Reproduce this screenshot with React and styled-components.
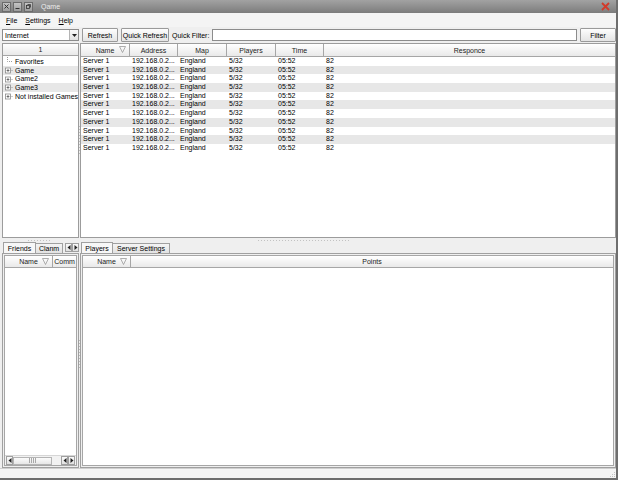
import React from "react"
import styled, { createGlobalStyle } from "styled-components"

const GlobalStyle = createGlobalStyle`
  html, body {
    margin: 0;
    padding: 0;
  }
  body {
    font-family: "Liberation Sans", Arial, sans-serif;
    font-size: 7px;
    color: #000;
    background: #fff;
  }
  * {
    box-sizing: border-box;
  }
`

const Window = styled.div`
  width: 618px;
  height: 480px;
  display: flex;
  flex-direction: column;
  background: #efefef;
  border-right: 2px solid #6e6e6e;
  border-bottom: 2px solid #6e6e6e;
  overflow: hidden;
`

const TitleBar = styled.div`
  height: 13px;
  flex: none;
  display: flex;
  align-items: center;
  padding: 0 2px;
  background: linear-gradient(#a2a2a2, #7c7c7c);
  color: #ececec;
`

const TitleButton = styled.div`
  width: 9px;
  height: 10px;
  margin-right: 2px;
  display: flex;
  align-items: center;
  justify-content: center;
  border: 1px solid #6c6c6c;
  background: linear-gradient(#c4c4c4, #9c9c9c);
`

const TitleText = styled.span`
  margin-left: 6px;
  flex: 1;
`

const MenuBar = styled.div`
  height: 14px;
  flex: none;
  display: flex;
  align-items: center;
  padding-left: 2px;
  background: #f4f4f4;
`

const MenuItem = styled.span`
  padding: 0 4px;
  u {
    text-decoration: underline;
  }
`

const Toolbar = styled.div`
  height: 16px;
  flex: none;
  display: flex;
  align-items: center;
  padding-left: 2px;
  gap: 3px;
`

const Combo = styled.div`
  width: 77px;
  height: 12px;
  display: flex;
  align-items: center;
  justify-content: space-between;
  padding-left: 2px;
  background: #fff;
  border: 1px solid #8c8c8c;
  margin-right: 0;
`

const ComboArrow = styled.div`
  width: 9px;
  height: 10px;
  display: flex;
  align-items: center;
  justify-content: center;
  border-left: 1px solid #b4b4b4;
  background: linear-gradient(#fafafa, #e2e2e2);
`

const Button = styled.div`
  width: ${({ w }) => w}px;
  height: 14px;
  display: flex;
  align-items: center;
  justify-content: center;
  border: 1px solid #9a9a9a;
  border-radius: 1px;
  background: linear-gradient(#fdfdfd, #e4e4e4);
`

const Label = styled.span`
  margin-left: 0;
`

const Input = styled.div`
  flex: 1;
  height: 12px;
  background: #fff;
  border: 1px solid #8c8c8c;
`

const Main = styled.div`
  flex: 1;
  display: flex;
  flex-direction: column;
  padding-left: 2px;
  min-height: 0;
`

const SplitRow = styled.div`
  height: ${({ h }) => h}px;
  flex: none;
  display: flex;
`

const LeftCol = styled.div`
  width: 77px;
  flex: none;
  display: flex;
  flex-direction: column;
`

const VHandle = styled.div`
  width: 1px;
  flex: none;
  display: flex;
  align-items: center;
  justify-content: center;
  &::after {
    content: "";
    width: 1px;
    height: 30px;
    background: repeating-linear-gradient(#bdbdbd 0 1px, transparent 1px 3px);
  }
`

const HHandle = styled.div`
  height: 4px;
  flex: none;
  display: flex;
  align-items: center;
  padding-left: 26px;
  &::before,
  &::after {
    content: "";
    height: 1px;
    background: repeating-linear-gradient(90deg, #c2c2c2 0 1px, transparent 1px 3px);
  }
  &::before {
    width: 24px;
  }
  &::after {
    width: 92px;
    margin-left: 206px;
  }
`

const RightCol = styled.div`
  flex: 1;
  display: flex;
  flex-direction: column;
  min-width: 0;
`

const Panel = styled.div`
  flex: 1;
  display: flex;
  flex-direction: column;
  background: #fff;
  border: 1px solid #9c9c9c;
  overflow: hidden;
  min-height: 0;
`

const HeaderRow = styled.div`
  display: grid;
  grid-template-columns: ${({ cols }) => cols};
  height: ${({ h }) => h || 12}px;
  flex: none;
`

const HeaderCell = styled.div`
  display: flex;
  align-items: center;
  justify-content: center;
  position: relative;
  color: #222;
  white-space: nowrap;
  overflow: hidden;
  border-right: 1px solid #a6a6a6;
  border-bottom: 1px solid #a6a6a6;
  background: linear-gradient(#ffffff, #e9e9e9);
  &:last-child {
    border-right: none;
  }
`

const SortMark = styled.svg`
  position: absolute;
  right: ${({ r }) => r || 4}px;
  top: 2px;
`

const Row = styled.div`
  display: grid;
  grid-template-columns: ${({ cols }) => cols};
  height: 8.7px;
  line-height: 8.7px;
  background: ${({ alt }) => (alt ? "#e7e7e7" : "#fff")};
`

const Cell = styled.div`
  padding-left: 2px;
  white-space: nowrap;
  overflow: hidden;
`

const TreeBody = styled.div`
  padding-top: 1px;
`

const TreeRow = styled.div`
  height: 8.8px;
  display: flex;
  align-items: center;
  padding-left: 1px;
  white-space: nowrap;
  background: ${({ alt }) => (alt ? "#e7e7e7" : "#fff")};
  svg {
    margin-right: 1px;
    flex: none;
  }
`

const TabBar = styled.div`
  height: 11px;
  flex: none;
  display: flex;
  align-items: flex-end;
  padding-left: 1px;
`

const Tab = styled.div`
  height: ${({ active }) => (active ? 11 : 10)}px;
  width: ${({ w }) => w}px;
  display: flex;
  align-items: center;
  justify-content: center;
  white-space: nowrap;
  overflow: hidden;
  border: 1px solid #a0a0a0;
  border-bottom: none;
  margin-right: -1px;
  background: ${({ active }) => (active ? "#f7f7f7" : "linear-gradient(#f4f4f4, #e2e2e2)")};
`

const TabArrows = styled.div`
  display: flex;
  margin-left: auto;
  margin-bottom: 1px;
`

const SmallBtn = styled.div`
  width: 7px;
  height: 9px;
  display: flex;
  align-items: center;
  justify-content: center;
  border: 1px solid #a0a0a0;
  background: linear-gradient(#fbfbfb, #e0e0e0);
`

const TabPane = styled.div`
  flex: 1;
  display: flex;
  flex-direction: column;
  border: 1px solid #a0a0a0;
  background: #efefef;
  padding: 1px;
  min-height: 0;
`

const InnerTable = styled.div`
  flex: 1;
  display: flex;
  flex-direction: column;
  background: #fff;
  border: 1px solid #a6a6a6;
  min-height: 0;
`

const Spacer = styled.div`
  flex: 1;
`

const ScrollBar = styled.div`
  height: 10px;
  flex: none;
  display: flex;
  align-items: center;
  padding: 0 1px;
  background: #f2f2f2;
  border-top: 1px solid #d6d6d6;
`

const Thumb = styled.div`
  width: 39px;
  height: 8px;
  display: flex;
  align-items: center;
  justify-content: center;
  gap: 1px;
  border: 1px solid #b4b4b4;
  background: linear-gradient(#fbfbfb, #e6e6e6);
  margin-right: auto;
  span {
    width: 1px;
    height: 5px;
    background: #a8a8a8;
  }
`

const StatusBar = styled.div`
  height: 10px;
  flex: none;
  display: flex;
  justify-content: flex-end;
  align-items: flex-end;
  background: #f5f5f5;
  border-top: 1px solid #cfcfcf;
`

const Arrow = ({ dir }) => (
  <svg width="4" height="5" viewBox="0 0 4 5">
    <polygon points={dir === "left" ? "3.5,0 0.5,2.5 3.5,5" : "0.5,0 3.5,2.5 0.5,5"} fill="#222" />
  </svg>
)

const Sort = ({ r }) => (
  <SortMark r={r} width="7" height="7" viewBox="0 0 7 7">
    <polygon points="0.5,0.5 6.5,0.5 3.5,6.5" fill="none" stroke="#9a9a9a" strokeWidth="0.8" />
  </SortMark>
)

const TreeIcon = ({ leaf }) =>
  leaf ? (
    <svg width="10" height="9" viewBox="0 0 10 9">
      <path d="M3.5 0 V4.5 H9" stroke="#9a9a9a" strokeWidth="1" strokeDasharray="1 1" fill="none" />
    </svg>
  ) : (
    <svg width="10" height="9" viewBox="0 0 10 9">
      <rect x="1.5" y="2" width="5" height="5" fill="#fff" stroke="#8a8a8a" strokeWidth="0.8" />
      <path d="M2.6 4.5 H5.4 M4 3.1 V5.9" stroke="#555" strokeWidth="0.8" />
      <path d="M6.5 4.5 H9" stroke="#9a9a9a" strokeWidth="1" strokeDasharray="1 1" />
    </svg>
  )

const serverCols = "49px 48px 49px 49px 48px 1fr"
const servers = Array.from({ length: 11 }, () => ({
  name: "Server 1",
  address: "192.168.0.2...",
  map: "England",
  players: "5/32",
  time: "05:52",
  responce: "82",
}))

const tree = [
  { label: "Favorites", leaf: true },
  { label: "Game" },
  { label: "Game2" },
  { label: "Game3" },
  { label: "Not installed Games" },
]

const App = () => (
  <>
    <GlobalStyle />
    <Window>
      <TitleBar>
        <TitleButton>
          <svg width="5" height="5" viewBox="0 0 5 5">
            <path d="M0.5 0.5 L4.5 4.5 M4.5 0.5 L0.5 4.5" stroke="#333" strokeWidth="1" />
          </svg>
        </TitleButton>
        <TitleButton>
          <svg width="5" height="5" viewBox="0 0 5 5">
            <path d="M0.5 4.5 H4.5" stroke="#333" strokeWidth="1" />
          </svg>
        </TitleButton>
        <TitleButton>
          <svg width="5" height="5" viewBox="0 0 5 5">
            <rect x="0.5" y="1.5" width="3" height="3" fill="none" stroke="#333" strokeWidth="0.8" />
            <path d="M1.5 0.5 H4.5 V3.5" fill="none" stroke="#333" strokeWidth="0.8" />
          </svg>
        </TitleButton>
        <TitleText>Qame</TitleText>
        <svg width="9" height="9" viewBox="0 0 9 9" style={{ marginRight: 4 }}>
          <path d="M1 1 L8 8 M8 1 L1 8" stroke="#d23a2a" strokeWidth="1.8" />
        </svg>
      </TitleBar>

      <MenuBar>
        <MenuItem><u>F</u>ile</MenuItem>
        <MenuItem><u>S</u>ettings</MenuItem>
        <MenuItem><u>H</u>elp</MenuItem>
      </MenuBar>

      <Toolbar>
        <Combo>
          Internet
          <ComboArrow>
            <svg width="5" height="3" viewBox="0 0 5 3">
              <polygon points="0,0 5,0 2.5,3" fill="#222" />
            </svg>
          </ComboArrow>
        </Combo>
        <Button w={36}>Refresh</Button>
        <Button w={48}>Quick Refresh</Button>
        <Label>Quick Filter:</Label>
        <Input />
        <Button w={36}>Filter</Button>
      </Toolbar>

      <Main>
        <SplitRow h={195}>
          <LeftCol>
            <Panel>
              <HeaderRow cols="1fr">
                <HeaderCell>1</HeaderCell>
              </HeaderRow>
              <TreeBody>
                {tree.map((t, i) => (
                  <TreeRow key={t.label} alt={i % 2 === 1}>
                    <TreeIcon leaf={t.leaf} />
                    {t.label}
                  </TreeRow>
                ))}
              </TreeBody>
            </Panel>
          </LeftCol>
          <VHandle />
          <RightCol>
            <Panel>
              <HeaderRow cols={serverCols} h={13}>
                <HeaderCell>Name<Sort r={3} /></HeaderCell>
                <HeaderCell>Address</HeaderCell>
                <HeaderCell>Map</HeaderCell>
                <HeaderCell>Players</HeaderCell>
                <HeaderCell>Time</HeaderCell>
                <HeaderCell>Responce</HeaderCell>
              </HeaderRow>
              {servers.map((s, i) => (
                <Row key={i} cols={serverCols} alt={i % 2 === 1}>
                  <Cell>{s.name}</Cell>
                  <Cell>{s.address}</Cell>
                  <Cell>{s.map}</Cell>
                  <Cell>{s.players}</Cell>
                  <Cell>{s.time}</Cell>
                  <Cell>{s.responce}</Cell>
                </Row>
              ))}
            </Panel>
          </RightCol>
        </SplitRow>

        <HHandle />

        <SplitRow h={226}>
          <LeftCol>
            <TabBar>
              <Tab active w={33}>Friends</Tab>
              <Tab w={28}>Clanm</Tab>
              <TabArrows>
                <SmallBtn><Arrow dir="left" /></SmallBtn>
                <SmallBtn><Arrow dir="right" /></SmallBtn>
              </TabArrows>
            </TabBar>
            <TabPane>
              <InnerTable>
                <HeaderRow cols="48px 1fr">
                  <HeaderCell>Name<Sort r={3} /></HeaderCell>
                  <HeaderCell>Comm</HeaderCell>
                </HeaderRow>
                <Spacer />
                <ScrollBar>
                  <SmallBtn><Arrow dir="left" /></SmallBtn>
                  <Thumb><span /><span /><span /><span /></Thumb>
                  <SmallBtn><Arrow dir="left" /></SmallBtn>
                  <SmallBtn><Arrow dir="right" /></SmallBtn>
                </ScrollBar>
              </InnerTable>
            </TabPane>
          </LeftCol>
          <VHandle />
          <RightCol>
            <TabBar>
              <Tab active w={32}>Players</Tab>
              <Tab w={58}>Server Settings</Tab>
            </TabBar>
            <TabPane>
              <InnerTable>
                <HeaderRow cols="48px 1fr">
                  <HeaderCell>Name<Sort r={3} /></HeaderCell>
                  <HeaderCell>Points</HeaderCell>
                </HeaderRow>
              </InnerTable>
            </TabPane>
          </RightCol>
        </SplitRow>
      </Main>

      <StatusBar>
        <svg width="8" height="8" viewBox="0 0 8 8">
          <g fill="#c4c4c4">
            <rect x="6" y="2" width="1" height="1" />
            <rect x="4" y="4" width="1" height="1" />
            <rect x="6" y="4" width="1" height="1" />
            <rect x="2" y="6" width="1" height="1" />
            <rect x="4" y="6" width="1" height="1" />
            <rect x="6" y="6" width="1" height="1" />
          </g>
        </svg>
      </StatusBar>
    </Window>
  </>
)

export default App
